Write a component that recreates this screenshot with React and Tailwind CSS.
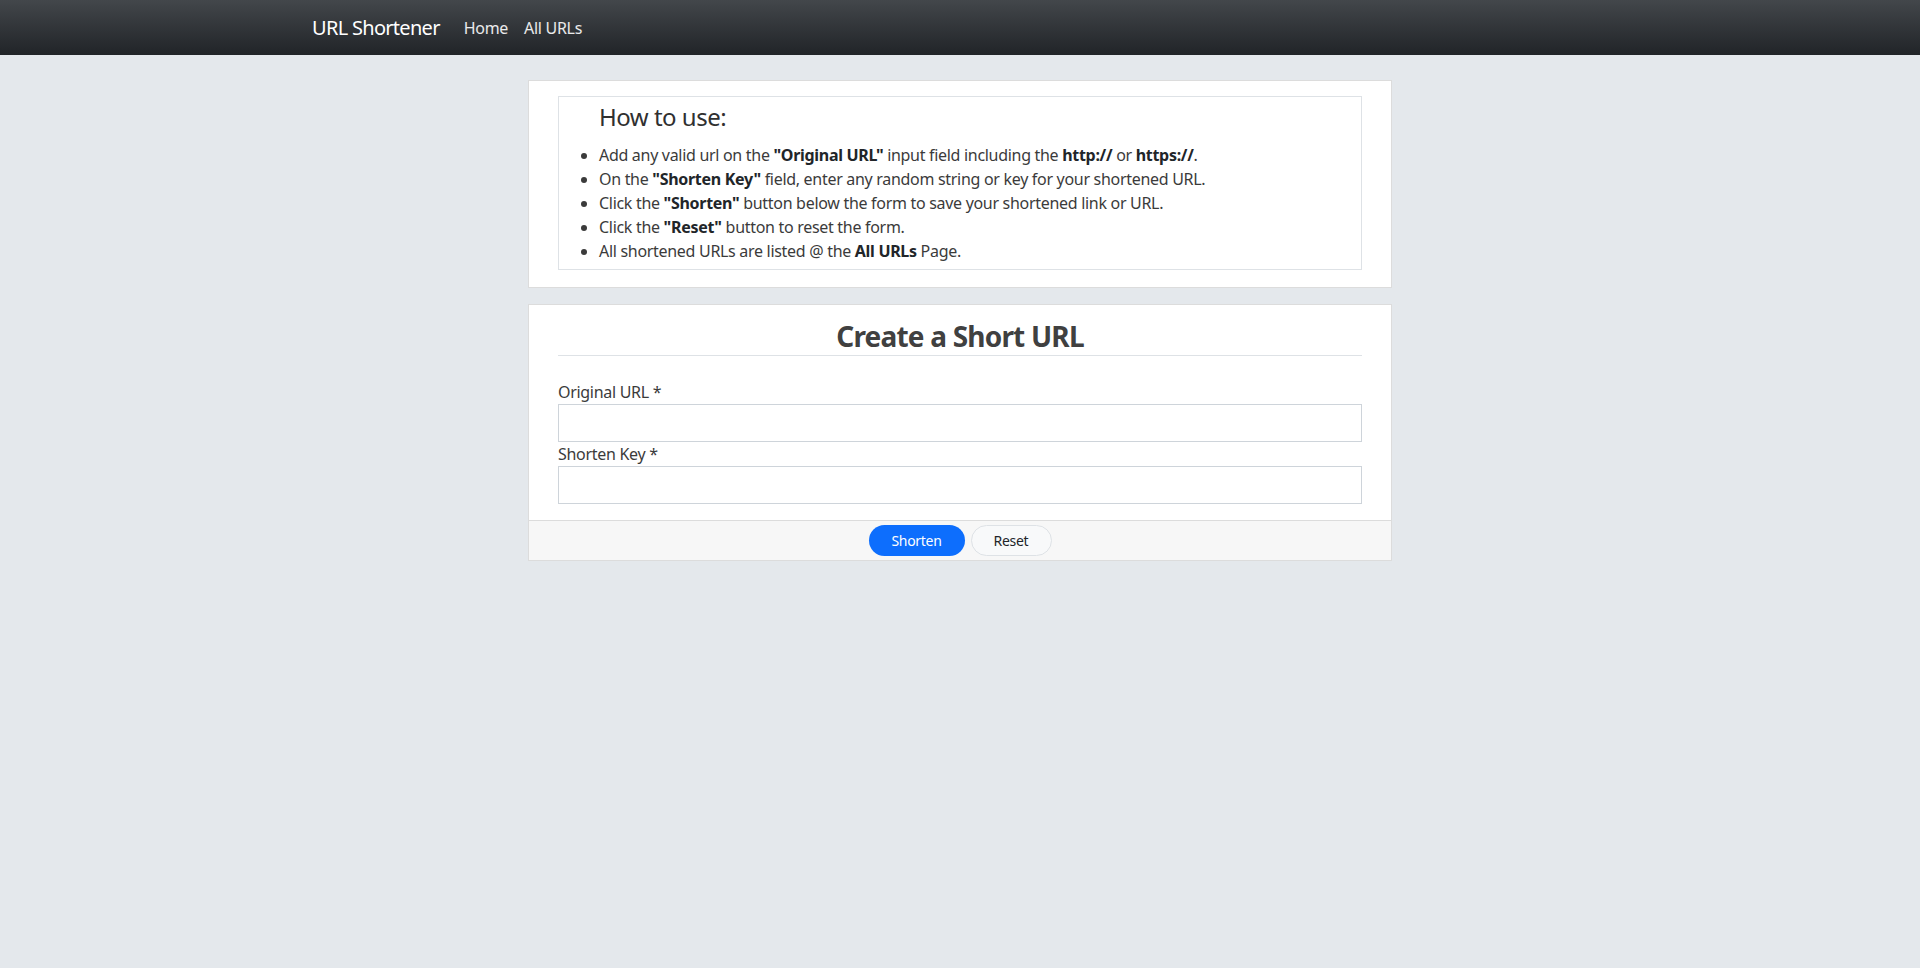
export default function App() {
  return (
    <div className="min-h-[968px] bg-[#e4e8ec] text-[#3b3b3b] font-['Noto_Sans',sans-serif] tracking-[-0.3px]">
      <nav className="h-[55px] bg-gradient-to-b from-[#43474b] to-[#212428]">
        <div className="w-[1320px] mx-auto px-3 h-full flex items-center">
          <a className="text-white text-[20px] tracking-[-0.7px] mr-[24px]">URL Shortener</a>
          <a className="text-white/90 text-[16px] mr-[16px]">Home</a>
          <a className="text-white/90 text-[16px]">All URLs</a>
        </div>
      </nav>

      <main className="w-[864px] mx-auto pt-[25px]">
        <section className="bg-white border border-[#dcdcdc] px-[29px] pt-[15px] pb-[17px]">
          <div className="border border-[#dee2e6] pt-[6px] pb-[6px]">
            <h4 className="text-[24px] leading-[1.2] pl-[40px] mb-[11px] text-[#303030] tracking-[-0.5px]">How to use:</h4>
            <ul className="list-disc pl-[40px] text-[16px] leading-[24px]">
              <li>Add any valid url on the <b className="text-[#212529]">"Original URL"</b> input field including the <b className="text-[#212529]">http://</b> or <b className="text-[#212529]">https://</b>.</li>
              <li>On the <b className="text-[#212529]">"Shorten Key"</b> field, enter any random string or key for your shortened URL.</li>
              <li>Click the <b className="text-[#212529]">"Shorten"</b> button below the form to save your shortened link or URL.</li>
              <li>Click the <b className="text-[#212529]">"Reset"</b> button to reset the form.</li>
              <li>All shortened URLs are listed @ the <b className="text-[#212529]">All URLs</b> Page.</li>
            </ul>
          </div>
        </section>

        <section className="mt-[16px] bg-white border border-[#dcdcdc]">
          <div className="px-[29px] pt-[15px] pb-[16px]">
            <h3 className="text-[28px] leading-[1.2] pb-[2px] font-bold text-center text-[#404040] tracking-[-0.8px] border-b border-[#dee2e6]">Create a Short URL</h3>
            <div className="mt-[24px]">
              <label className="block text-[16px] leading-[24px]">Original URL *</label>
              <input type="text" className="block w-full h-[38px] border border-[#ced4da] bg-white outline-none" />
              <label className="block text-[16px] leading-[24px]">Shorten Key *</label>
              <input type="text" className="block w-full h-[38px] border border-[#ced4da] bg-white outline-none" />
            </div>
          </div>
          <div className="h-[40px] bg-[#f7f7f7] border-t border-[#dcdcdc] flex items-center justify-center gap-[6px]">
            <button className="w-[96px] h-[31px] rounded-full bg-[#0d6efd] text-white text-[14px]">Shorten</button>
            <button className="w-[81px] h-[31px] rounded-full bg-[#f8f9fa] border border-[#dee2e6] text-[#212529] text-[14px]">Reset</button>
          </div>
        </section>
      </main>
    </div>
  );
}
